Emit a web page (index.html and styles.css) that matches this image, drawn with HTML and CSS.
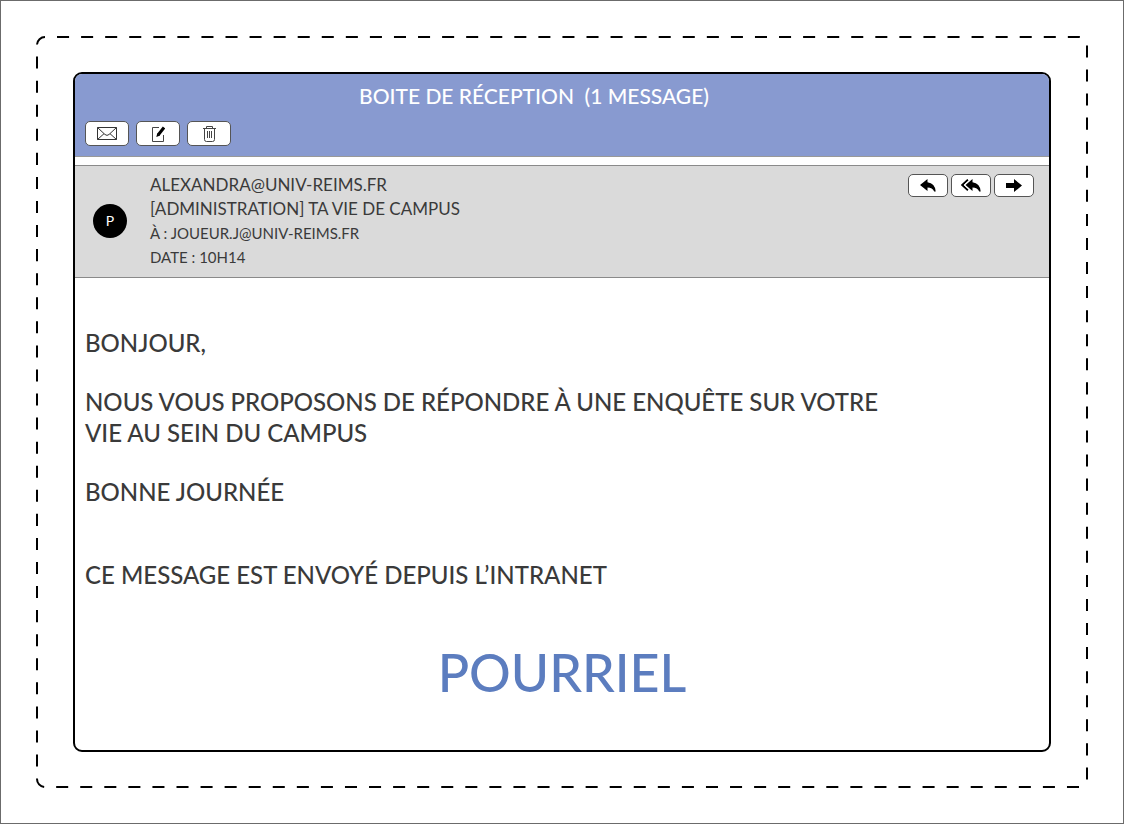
FILE: index.html
```html
<!DOCTYPE html>
<html lang="fr">
<head>
<meta charset="utf-8">
<title>Boite de réception</title>
<link rel="stylesheet" href="styles.css">
</head>
<body>
<main class="sheet">
  <div class="frame">
    <svg class="frame-dashes" aria-hidden="true"><rect class="frame-line" rx="8" pathLength="3576"/></svg>
    <article class="card">
      <header class="topbar">
        <h1 class="title">BOITE DE RÉCEPTION&nbsp; (1 MESSAGE)</h1>
        <div class="tools">
          <button class="btn" type="button" aria-label="Messages">
            <svg width="20" height="13" viewBox="0 0 20 13" fill="none" stroke="#333"><path d="M.5.5h19v12H.5zM.5.5 8 7.5q2 1.8 4 0l7.5-7M.5 12.500 7 6.700M19.500 12.500 13 6.700"/></svg>
          </button>
          <button class="btn" type="button" aria-label="Écrire">
            <svg width="14" height="16" viewBox="0 0 14 16" fill="none" stroke="#444"><path d="M8 1.500H1.500v14h11V9"/><path d="M7.500 8.500 13 1.500" stroke="#000" stroke-width="3"/><path d="m6.300 7-1 4L9.200 9.500z" fill="#000" stroke="none"/></svg>
          </button>
          <button class="btn" type="button" aria-label="Supprimer">
            <svg width="13" height="16" viewBox="0 0 13 16" fill="none" stroke="#444"><path d="M0 2.500h13M3.500 2.500v-2h6v2M1.500 2.500v11q0 2 2 2h6q2 0 2-2v-11M4.500 5v7M6.500 5v7M8.500 5v7"/></svg>
          </button>
        </div>
      </header>
      <section class="meta">
        <div class="avatar">P</div>
        <div class="details">
          <p class="line">ALEXANDRA@UNIV-REIMS.FR</p>
          <p class="line">[ADMINISTRATION] TA VIE DE CAMPUS</p>
          <p class="line line-small">À : JOUEUR.J@UNIV-REIMS.FR</p>
          <p class="line line-small">DATE : 10H14</p>
        </div>
        <div class="actions">
          <button class="btn btn-action" type="button" aria-label="Répondre">
            <svg width="16" height="13" viewBox="0 0 16 13"><path d="M0 6 7.500 0v3.200Q15 4 15.700 12.500h-1.500Q12.500 8.500 7.500 8.500V12z"/></svg>
          </button>
          <button class="btn btn-action" type="button" aria-label="Répondre à tous">
            <svg width="20" height="13" viewBox="0 0 20 13"><path d="M4.500 6 11.500 0v3.200Q19 4 19.700 12.500h-1.500Q16.500 8.500 11.500 8.500V12z"/><path d="M7 .7 1.200 6 7 11.300" fill="none" stroke="#000" stroke-width="2"/><path d="M9 .7 3.200 6 9 11.300" fill="none" stroke="#fff"/></svg>
          </button>
          <button class="btn btn-action" type="button" aria-label="Transférer">
            <svg width="16" height="13" viewBox="0 0 16 13"><path d="M0 4h8V0l8 6.500L8 13V9H0z"/></svg>
          </button>
        </div>
      </section>
      <section class="message">
        <p class="para">BONJOUR,</p>
        <p class="para">NOUS VOUS PROPOSONS DE RÉPONDRE À UNE ENQUÊTE SUR VOTRE<br>VIE AU SEIN DU CAMPUS</p>
        <p class="para">BONNE JOURNÉE</p>
        <p class="para para-origin">CE MESSAGE EST ENVOYÉ DEPUIS L’INTRANET</p>
        <h2 class="verdict">POURRIEL</h2>
      </section>
    </article>
  </div>
</main>
</body>
</html>
```
FILE: styles.css
```css
* { box-sizing: border-box; }
body {
  margin: 0;
  background: #fff;
  color: #3a3a3a;
  font-family: Lato, "Open Sans", sans-serif;
}
h1, h2, p { margin: 0; font-weight: 500; }
.sheet {
  display: flex;
  min-height: 100vh;
  padding: 35px;
  border: 1px solid #6b6b6b;
}
.frame {
  position: relative;
  display: flex;
  flex: 1;
  padding: 36px 37px;
}
.frame-dashes {
  position: absolute;
  inset: 1px;
  width: calc(100% - 2px);
  height: calc(100% - 2px);
  overflow: visible;
}
.frame-line {
  width: 100%;
  height: 100%;
  fill: none;
  stroke: #000;
  stroke-width: 2;
  stroke-dasharray: 12 12;
  stroke-dashoffset: 12;
}
.card {
  position: relative;
  flex: 1;
  border: 2px solid #000;
  border-radius: 9px;
  background: #fff;
  overflow: hidden;
}
.topbar {
  padding: 8px 10px 10px;
  background: #889ad0;
  border-bottom: 1px solid #999;
}
.title {
  padding-right: 56px;
  color: #fff;
  font-size: 21px;
  line-height: 28px;
  text-align: center;
}
.tools { display: flex; gap: 7px; margin-top: 11px; }
.btn {
  display: flex;
  align-items: center;
  justify-content: center;
  width: 44px;
  height: 25px;
  padding: 0;
  border: 1px solid #555;
  border-radius: 5px;
  background: #fff;
}
.meta {
  display: flex;
  align-items: flex-start;
  margin-top: 8px;
  padding: 7px 15px 8px 18px;
  background: #dadada;
  border: solid #8a8a8a;
  border-width: 1px 0;
}
.avatar {
  align-self: center;
  width: 34px;
  height: 34px;
  border-radius: 50%;
  background: #000;
  color: #fff;
  font-size: 14px;
  line-height: 34px;
  text-align: center;
}
.details { flex: 1; margin-left: 23px; }
.line { font-size: 17px; font-weight: 400; line-height: 24px; }
.line-small { font-size: 15px; }
.actions { display: flex; gap: 3px; margin-top: 1px; }
.btn-action { width: 40px; height: 23px; }
.message { padding: 49px 10px 40px; }
.para { margin-bottom: 28px; font-size: 24px; line-height: 31px; }
.para-origin { margin-top: 52px; }
.verdict {
  margin-top: 50px;
  color: #5c7dbf;
  font-size: 52px;
  line-height: 64px;
  text-align: center;
}
```
